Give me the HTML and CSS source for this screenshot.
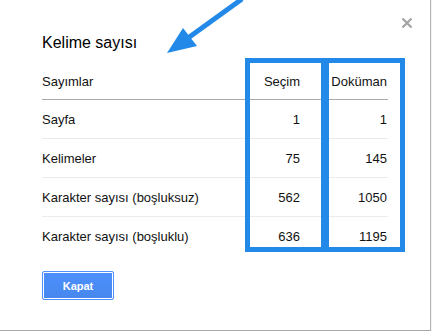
FILE: index.html
```html
<!DOCTYPE html>
<html lang="tr">
<head>
<meta charset="utf-8">
<title>Kelime sayısı</title>
<link rel="stylesheet" href="styles.css">
</head>
<body>
<div class="dialog">
  <div class="close" aria-label="Kapat">
    <svg width="12" height="12" viewBox="0 0 12 12"><path d="M1.5 1.5 L10.5 10.5 M10.5 1.5 L1.5 10.5" stroke="#a3a3a3" stroke-width="2.2" fill="none"/></svg>
  </div>
  <div class="title">Kelime sayısı</div>
  <table class="counts">
    <thead>
      <tr><th class="label">Sayımlar</th><th class="num c2">Seçim</th><th class="num c3">Doküman</th></tr>
    </thead>
    <tbody>
      <tr><td class="label">Sayfa</td><td class="num c2">1</td><td class="num c3">1</td></tr>
      <tr><td class="label">Kelimeler</td><td class="num c2">75</td><td class="num c3">145</td></tr>
      <tr><td class="label">Karakter sayısı (boşluksuz)</td><td class="num c2">562</td><td class="num c3">1050</td></tr>
      <tr class="last"><td class="label">Karakter sayısı (boşluklu)</td><td class="num c2">636</td><td class="num c3">1195</td></tr>
    </tbody>
  </table>
  <button class="btn">Kapat</button>

  <div class="mark mark1"></div>
  <div class="mark mark2"></div>
  <svg class="arrow" width="432" height="70" viewBox="0 0 432 70">
    <line x1="242" y1="-1" x2="188" y2="38" stroke="#2389e9" stroke-width="5"/>
    <polygon points="167,53 183,28 197,46" fill="#2389e9"/>
  </svg>
</div>
</body>
</html>
```
FILE: styles.css
```css
html, body {
  margin: 0;
  padding: 0;
}
body {
  background: #f2f2f2;
  width: 432px;
  height: 331px;
  overflow: hidden;
  font-family: "Liberation Sans", Arial, sans-serif;
  color: #111;
}
.dialog {
  position: relative;
  box-sizing: border-box;
  width: 431px;
  height: 331px;
  background: #fff;
  border-right: 1px solid #b4b4b4;
  border-bottom: 1px solid #a8a8a8;
  padding: 33px 0 0 42px;
}
.title {
  font-size: 16px;
  line-height: 20px;
  color: #000;
  margin-bottom: 10px;
}
.close {
  position: absolute;
  left: 401px;
  top: 17px;
  width: 12px;
  height: 12px;
}
.close svg { display: block; }
.counts {
  border-collapse: collapse;
  width: 346px;
  font-size: 13px;
}
.counts th {
  font-weight: normal;
  height: 36px;
  padding: 0;
  vertical-align: middle;
  border-bottom: 1px solid #ababab;
}
.counts td {
  height: 38px;
  padding: 0;
  vertical-align: middle;
  border-bottom: 1px solid #ebebeb;
}
.counts tr.last td { border-bottom: none; }
.label { text-align: left; }
.num { text-align: right; }
.c2 { width: 80px; padding-right: 1px !important; }
.c3 { width: 86px; padding-right: 1px !important; }
.btn {
  display: block;
  margin-top: 16px;
  width: 72px;
  height: 29px;
  box-sizing: border-box;
  border: 1px solid #4d90fe;
  border-radius: 2px;
  box-shadow: inset 0 0 0 1px #fff;
  background: linear-gradient(#4d90fe, #4787ed);
  color: #fff;
  font-family: "Liberation Sans", Arial, sans-serif;
  font-weight: bold;
  font-size: 11px;
  padding: 0;
}
.mark {
  position: absolute;
  top: 58px;
  height: 194px;
  width: 81px;
  box-sizing: border-box;
  border: 5px solid #2389e9;
}
.mark1 { left: 245px; }
.mark2 { left: 324px; }
.arrow {
  position: absolute;
  left: 0;
  top: 0;
}
```
